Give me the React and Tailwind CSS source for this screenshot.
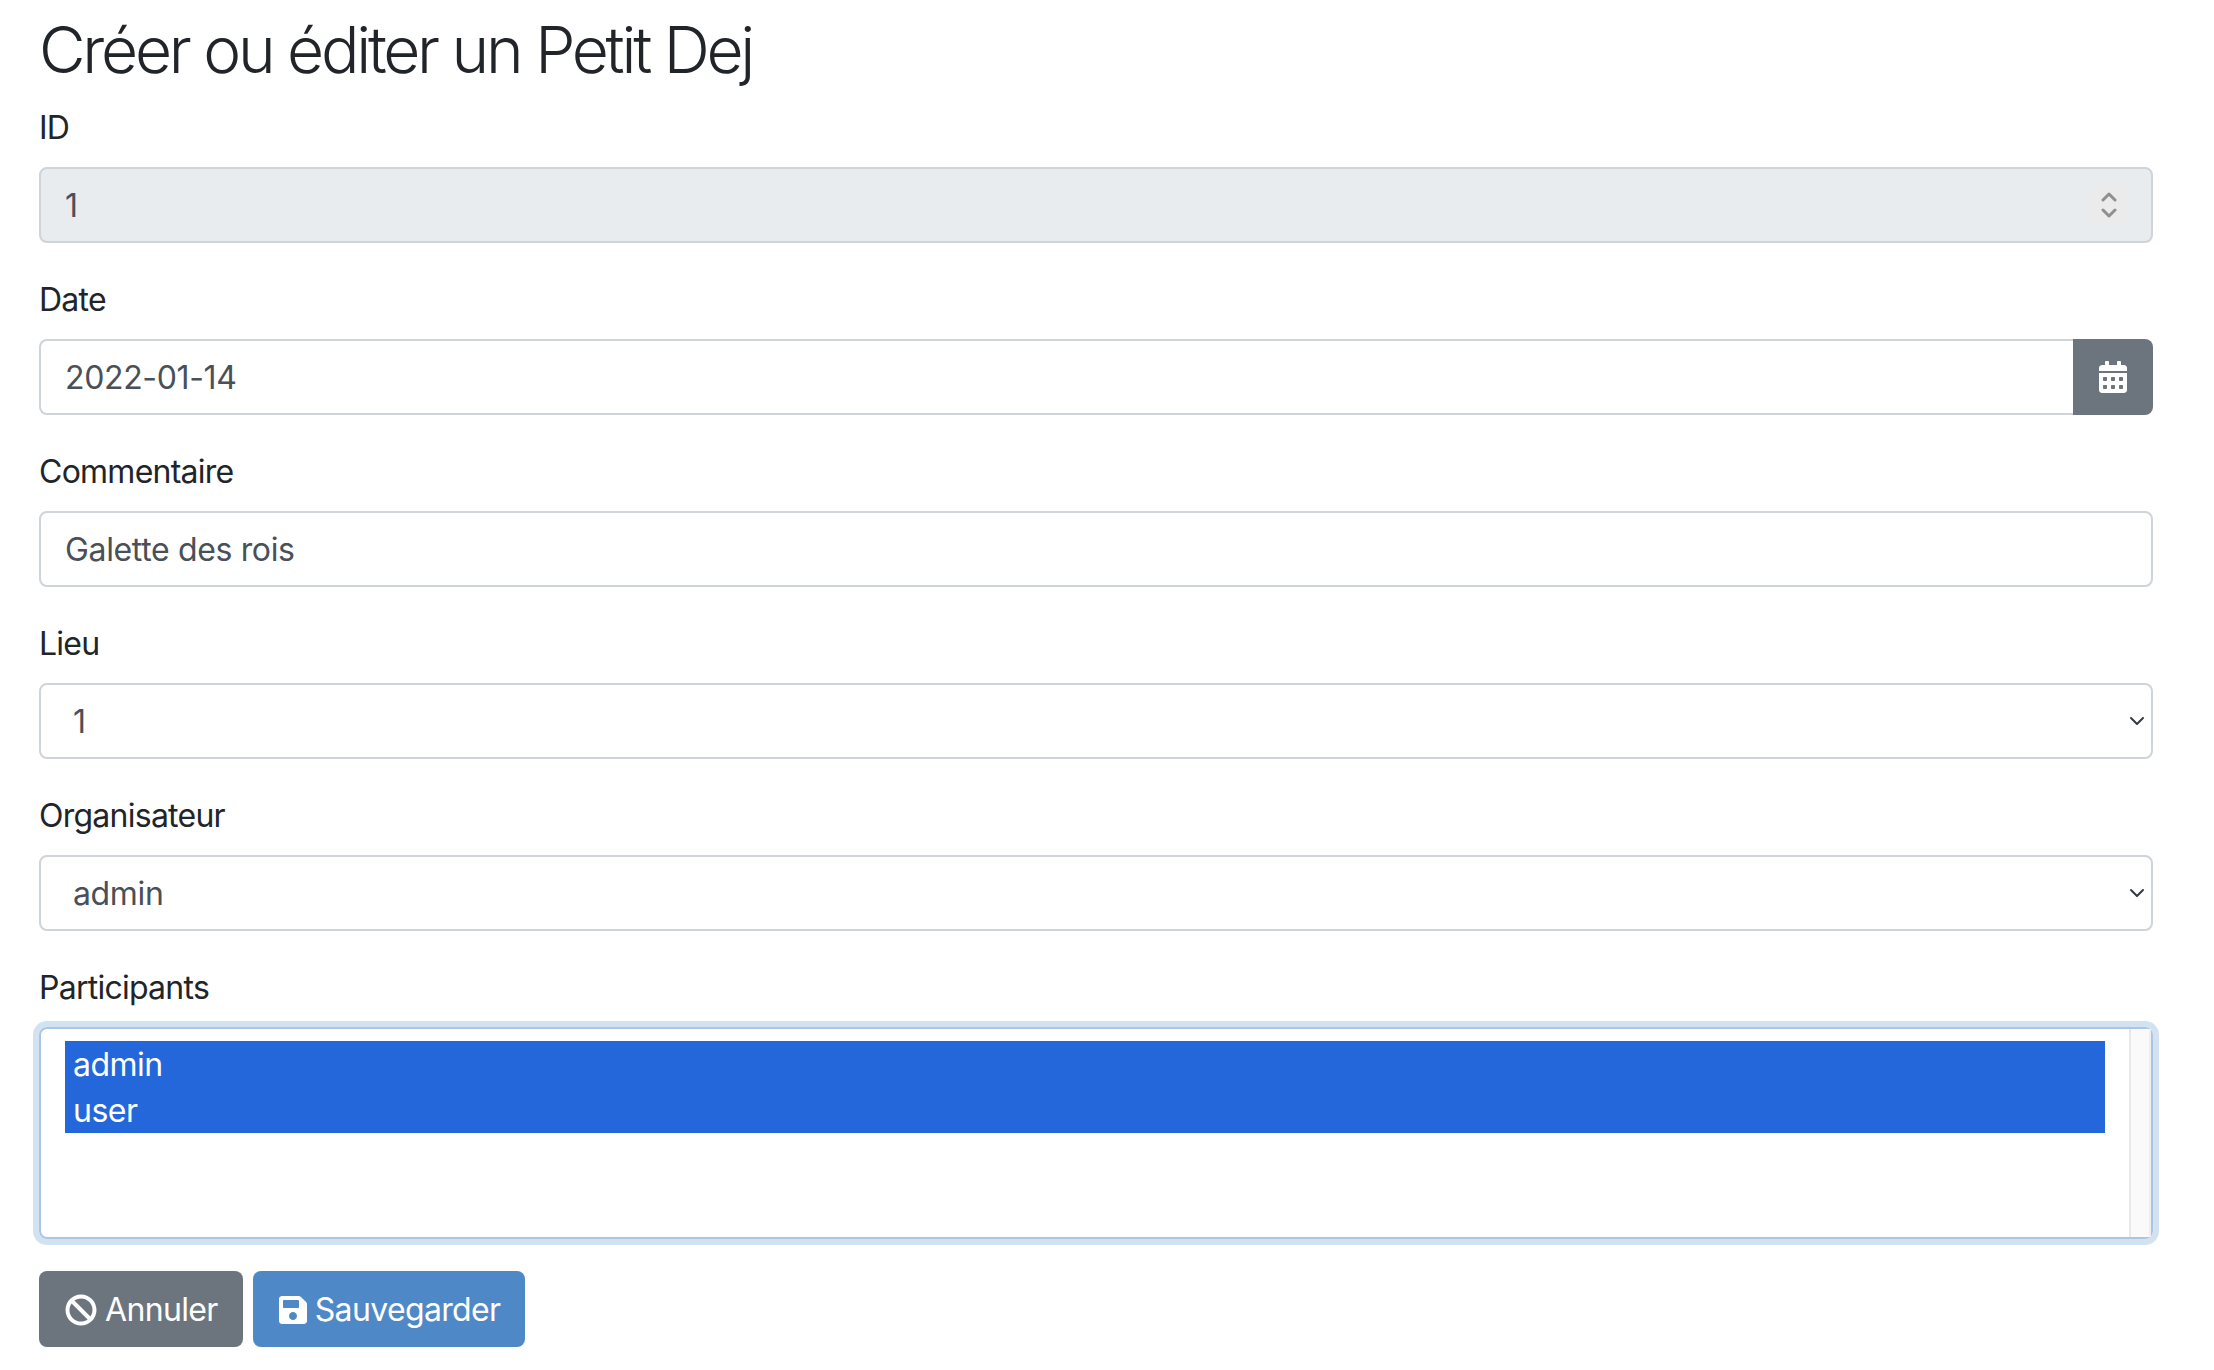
import { FaBan, FaSave, FaCalendarAlt } from "react-icons/fa";

const font = { fontFamily: '"Inter", "Liberation Sans", sans-serif' };

const labelCls = "block text-[32px] leading-[50px] mb-[14px] text-[#212529] tracking-[-0.75px]";
const inputCls =
  "h-[76px] w-full border-2 border-[#ced4da] rounded-[8px] px-[24px] pt-[2px] flex items-center text-[32px] text-[#495057] tracking-[-0.35px]";

function Chevron() {
  return (
    <svg viewBox="0 0 16 16" className="w-[16px] h-[16px] absolute right-[6px] top-[28px]">
      <path d="M2 5l6 6 6-6" fill="none" stroke="#343a40" strokeWidth="2" strokeLinecap="round" strokeLinejoin="round" />
    </svg>
  );
}

function Field({ label, children }) {
  return (
    <div className="mb-[32px]">
      <label className={labelCls}>{label}</label>
      {children}
    </div>
  );
}

export default function App() {
  return (
    <div className="pl-[39px] pr-[61px] pt-[11px] bg-white min-h-screen" style={font}>
      <h2 className="text-[64px] leading-[77px] mb-[15px] font-[350] text-[#212529] tracking-[-3.25px]">Créer ou éditer un Petit Dej</h2>
      <Field label="ID">
        <div className={`${inputCls} bg-[#e9ecef] relative`}>
          1
          <div className="absolute right-[24px] top-[18px] w-[36px] h-[36px] bg-[#ebebeb] flex items-center justify-center">
            <svg viewBox="0 0 16 26" className="w-[16px] h-[26px]">
              <path d="M2 8l6-6 6 6M2 18l6 6 6-6" fill="none" stroke="#8e8e93" strokeWidth="3" strokeLinecap="round" strokeLinejoin="round" />
            </svg>
          </div>
        </div>
      </Field>
      <Field label="Date">
        <div className="flex">
          <div className={`${inputCls} rounded-r-none border-r-0 flex-1`}>2022-01-14</div>
          <div className="w-[80px] h-[76px] bg-[#6c757d] rounded-r-[8px] flex items-center justify-center">
            <FaCalendarAlt className="w-[28px] h-[32px] text-white" />
          </div>
        </div>
      </Field>
      <Field label="Commentaire">
        <div className={inputCls}>Galette des rois</div>
      </Field>
      <Field label="Lieu">
        <div className={`${inputCls} relative pl-[32px]`}>
          1
          <Chevron />
        </div>
      </Field>
      <Field label="Organisateur">
        <div className={`${inputCls} relative pl-[32px]`}>
          admin
          <Chevron />
        </div>
      </Field>
      <Field label="Participants">
        <div className="h-[212px] border-2 border-[#a8c6e6] rounded-[8px] shadow-[0_0_0_6px_#d3e2f1] pl-[24px] pt-[12px] flex">
          <div className="flex-1 text-white text-[32px] leading-[48px] tracking-[-0.5px]">
            <div className="bg-[#2367db] pl-[8px] h-[46px]">admin</div>
            <div className="bg-[#2367db] pl-[8px] h-[46px]">user</div>
          </div>
          <div className="w-[22px] ml-[24px] -mt-[12px] bg-[#fafafa] border-l-2 border-r-2 border-l-[#e8e8e8] border-r-[#efefef]"></div>
        </div>
      </Field>
      <div className="flex gap-[10px]">
        <button className="h-[76px] pl-[26px] pr-[25px] pt-[2px] bg-[#6c757d] rounded-[8px] text-white text-[32px] tracking-[-0.65px] flex items-center gap-[8px]">
          <FaBan className="w-[32px] h-[32px]" />
          Annuler
        </button>
        <button className="h-[76px] pl-[26px] pr-[25px] pt-[2px] bg-[#4f88c6] rounded-[8px] text-white text-[32px] tracking-[-0.65px] flex items-center gap-[8px]">
          <FaSave className="w-[28px] h-[32px]" />
          Sauvegarder
        </button>
      </div>
    </div>
  );
}
